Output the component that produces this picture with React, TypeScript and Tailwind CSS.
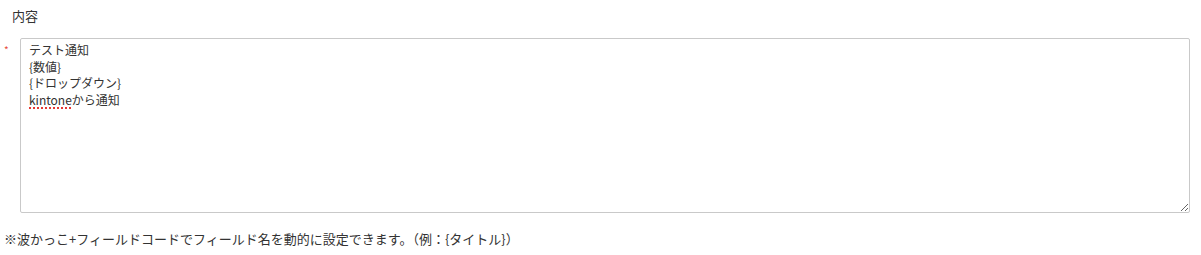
import React from 'react';

const lines = ['テスト通知', '{数値}', '{ドロップダウン}'];

export default function App(): React.ReactElement {
  return (
    <div
      className="w-[1201px] h-[255px] bg-white text-[#333]"
      style={{ fontFamily: '"Noto Sans CJK JP", "Noto Sans", sans-serif' }}
    >
      <p className="pl-[12px] pt-[6px] text-[13px] leading-[20px]">内容</p>

      {/* field row */}
      <div className="flex mt-[12px]">
        <span className="w-[20px] pl-[4px] pt-[5px] text-[10px] leading-[14px] text-[#e74c3c]">*</span>
        <div className="w-[1170px] h-[175px] border border-[#c9c9c9] rounded-[2px] px-[8px] pt-[3px] text-[12px] leading-[16.5px] resize overflow-auto">
          {lines.map(l => (
            <div key={l}>{l}</div>
          ))}
          <div>
            <span className="underline decoration-dotted decoration-[#e53935] decoration-[1.5px] underline-offset-[3px]">kintone</span>
            から通知
          </div>
        </div>
      </div>

      {/* hint */}
      <p className="pl-[4px] mt-[16px] text-[13px] leading-[20px]">
        ※波かっこ+フィールドコードでフィールド名を動的に設定できます。（例：{'{タイトル}'}）
      </p>
    </div>
  );
}
